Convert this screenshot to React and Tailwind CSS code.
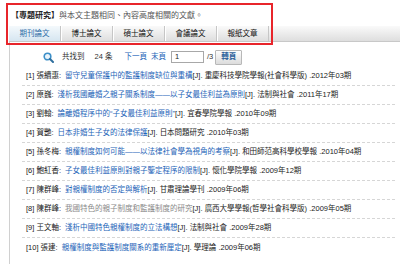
import React from "react";

const tabs = ["期刊論文", "博士論文", "碩士論文", "會議論文", "報紙文章"];

const rows = [
  { n: 1, author: "張續惠", title: "留守兒童保護中的監護制度缺位與重構", src: "重慶科技學院學報(社會科學版)", year: "2012年03期" },
  { n: 2, author: "原巍", title: "淺析我國離婚之親子關系制度——以子女最佳利益為原則", src: "法制與社會", year: "2011年17期" },
  { n: 3, author: "劉翰", title: "論離婚程序中的“子女最佳利益原則”", src: "宜春學院學報", year: "2010年09期" },
  { n: 4, author: "賀艷", title: "日本非婚生子女的法律保護", src: "日本問題研究", year: "2010年03期" },
  { n: 5, author: "孫冬梅", title: "親權制度如何可能——以法律社會學為視角的考察", src: "和田師范高科學校學報", year: "2010年04期" },
  { n: 6, author: "鮑紅香", title: "子女最佳利益原則對親子鑒定程序的限制", src: "懷化學院學報", year: "2009年12期" },
  { n: 7, author: "陳群峰", title: "對親權制度的否定與解析", src: "甘肅理論學刊", year: "2009年06期" },
  { n: 8, author: "陳群峰", title: "我國特色的親子制度和監護制度的研究", src: "廣西大學學報(哲學社會科學版)", year: "2009年05期", visited: true },
  { n: 9, author: "王文軸", title: "淺析中國特色親權制度的立法構想", src: "法制與社會", year: "2009年28期" },
  { n: 10, author: "張建", title: "親權制度與監護制度關系的重新厘定", src: "學理論", year: "2009年06期" },
];

function SearchIcon() {
  return (
    <svg width="11" height="11" viewBox="0 0 11 11">
      <circle cx="4.5" cy="4.5" r="3.3" fill="#eaf4fb" stroke="#3c8fc8" strokeWidth="1.6" />
      <line x1="7" y1="7" x2="10" y2="10" stroke="#2f6f9e" strokeWidth="2" strokeLinecap="round" />
    </svg>
  );
}

export default function App() {
  return (
    <div className="relative w-[400px] h-[264px] overflow-hidden bg-white text-[7.5px] leading-none text-[#333] font-['Liberation_Sans','Noto_Sans_CJK_TC',sans-serif]">
      {/* header */}
      <div className="h-[26px] pl-[11px] pt-[12px] text-[8px] text-[#555]">
        <span className="font-bold text-[#222]">【專題研究】</span>與本文主題相同、內容高度相關的文獻。
      </div>

      {/* tabs */}
      <div className="ml-[9px] h-[16px] flex bg-gradient-to-b from-[#fafafa] to-[#dedede] border-b border-[#c8c8c8]">
        {tabs.map((t, i) => (
          <div
            key={t}
            className={
              i === 0
                ? "w-[52px] flex items-center justify-center bg-gradient-to-b from-[#f4f9fc] to-[#d6e6f1] text-[#2f6ea8] border-r border-[#c6c6c6]"
                : "w-[52px] flex items-center justify-center text-[#111] border-r border-[#c6c6c6] shadow-[inset_1px_0_0_#fff]"
            }
          >
            {t}
          </div>
        ))}
      </div>

      {/* body */}
      <div className="ml-[9px] h-[222px] border-l border-[#d0d0d0]">
        {/* pager */}
        <div className="h-[24px] pt-[6px] flex items-center pl-[33px]">
          <SearchIcon />
          <span className="ml-[8px]">共找到</span>
          <span className="ml-[10px]">24 条</span>
          <span className="ml-[12px] text-[#1d64b8]">下一頁</span>
          <span className="ml-[4px] text-[#1d64b8]">末頁</span>
          <div className="ml-[5px] w-[33px] h-[12px] border border-[#a8a8a8] bg-white flex items-center pl-[3px] text-[#222]">1</div>
          <span className="ml-[3px]">/3</span>
          <div className="ml-[2px] w-[27px] h-[15px] border border-[#b8b8b8] rounded-[1px] bg-gradient-to-b from-[#fdfdfd] to-[#dcdcdc] flex items-center justify-center font-bold text-[#2a5e9a]">
            轉頁
          </div>
        </div>

        {/* list */}
        <div className="ml-[12px] mr-[5px] pt-[1px]">
          {rows.map((r) => (
            <div
              key={r.n}
              className="h-[19px] flex items-center pl-[4px] whitespace-nowrap border-b border-dashed border-[#d6d6d6] last:border-b-0"
            >
              <span className="text-[#222]">[{r.n}] {r.author}:</span>
              <span className={r.visited ? "ml-[4px] text-[#8a8a8a]" : "ml-[4px] text-[#1d64b8]"}>{r.title}</span>
              <span className="text-[#222]">[J]. {r.src} .{r.year}</span>
            </div>
          ))}
        </div>
      </div>

      {/* red annotation box */}
      <div className="absolute left-[6px] top-[3px] w-[267px] h-[42px] border-2 border-[#e8252b] pointer-events-none" />
    </div>
  );
}
